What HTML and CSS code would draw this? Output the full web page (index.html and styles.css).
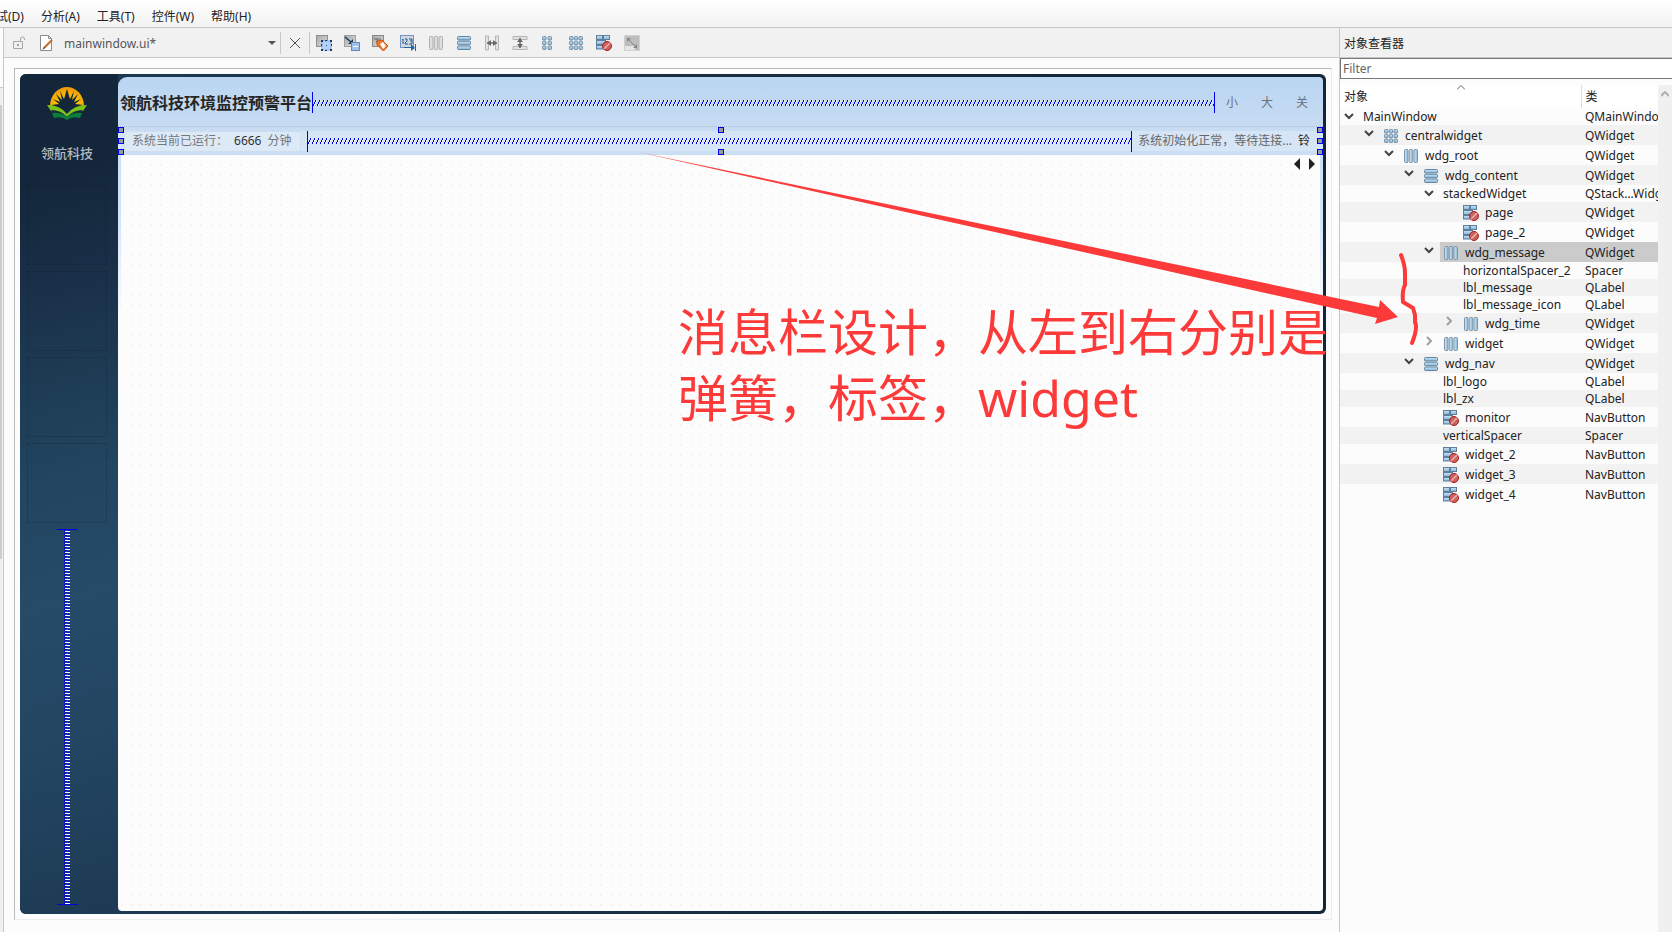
FILE: index.html
```html
<!DOCTYPE html>
<html lang="zh-CN">
<head>
<meta charset="utf-8">
<title>mainwindow.ui</title>
<link rel="stylesheet" href="styles.css">
</head>
<body>
<svg class="defs" aria-hidden="true">
  <defs>
    <linearGradient id="blue" x1="0" y1="0" x2="0" y2="1"><stop offset="0" stop-color="#c9e8fb"/><stop offset="1" stop-color="#84b0d4"/></linearGradient>
    <linearGradient id="blueH"><stop offset="0" stop-color="#d4ecfa"/><stop offset="1" stop-color="#8ab2d2"/></linearGradient>
    <linearGradient id="grey" x1="0" y1="0" x2="1" y2="1"><stop offset="0" stop-color="#a9a9a9"/><stop offset="1" stop-color="#dedede"/></linearGradient>
    <radialGradient id="sun" cx=".5" cy=".7" r=".7"><stop offset="0" stop-color="#ffe600"/><stop offset="1" stop-color="#f2930c"/></radialGradient>
    <pattern id="coil" width="4" height="6" patternUnits="userSpaceOnUse"><path d="M0 4h1v2H0zM1 2h1v2H1zM2 0h1v2H2z" fill="#0000d8"/><path d="M1 4h1v2H1zM2 2h1v2H2zM3 0h1v2H3z" fill="#fff" opacity=".6"/></pattern>
    <pattern id="coilV" width="6" height="3" patternUnits="userSpaceOnUse"><path d="M1 1h5v1H1z" fill="#fff"/><path d="M0 0h1v2H0zM1 2h2v1H1zM4 0h2v1H4z" fill="#0000f0"/></pattern>
  </defs>
  <symbol id="i-h" viewBox="0 0 16 16"><g fill="url(#blueH)" stroke="#7c95aa"><rect x="1.500" y="1.500" width="3.500" height="13" rx="1"/><rect x="6.250" y="1.500" width="3.500" height="13" rx="1"/><rect x="11" y="1.500" width="3.500" height="13" rx="1"/></g></symbol>
  <symbol id="i-hg" viewBox="0 0 16 16"><g fill="#dedede" stroke="#b0b0b0"><rect x="1.500" y="1.500" width="3.500" height="13" rx="1"/><rect x="6.250" y="1.500" width="3.500" height="13" rx="1"/><rect x="11" y="1.500" width="3.500" height="13" rx="1"/></g></symbol>
  <symbol id="i-v" viewBox="0 0 16 16"><g fill="url(#blue)" stroke="#64869f"><rect x="1.500" y="1.500" width="13" height="3.500" rx="1"/><rect x="1.500" y="6.250" width="13" height="3.500" rx="1"/><rect x="1.500" y="11" width="13" height="3.500" rx="1"/></g></symbol>
  <symbol id="i-grid" viewBox="0 0 16 16"><g fill="url(#blue)" stroke="#718ca3"><rect x="1.500" y="1.500" width="3.500" height="3.500" rx="1"/><rect x="6.250" y="1.500" width="3.500" height="3.500" rx="1"/><rect x="11" y="1.500" width="3.500" height="3.500" rx="1"/><rect x="1.500" y="6.250" width="3.500" height="3.500" rx="1"/><rect x="6.250" y="6.250" width="3.500" height="3.500" rx="1"/><rect x="11" y="6.250" width="3.500" height="3.500" rx="1"/><rect x="1.500" y="11" width="3.500" height="3.500" rx="1"/><rect x="6.250" y="11" width="3.500" height="3.500" rx="1"/><rect x="11" y="11" width="3.500" height="3.500" rx="1"/></g></symbol>
  <symbol id="i-form" viewBox="0 0 16 16"><g fill="url(#blue)" stroke="#718ca3"><rect x="2.500" y="1.500" width="3.500" height="3.500" rx="1"/><rect x="8" y="1.500" width="3.500" height="3.500" rx="1"/><rect x="2.500" y="6.250" width="3.500" height="3.500" rx="1"/><rect x="8" y="6.250" width="3.500" height="3.500" rx="1"/><rect x="2.500" y="11" width="3.500" height="3.500" rx="1"/><rect x="8" y="11" width="3.500" height="3.500" rx="1"/></g></symbol>
  <symbol id="i-break" viewBox="0 0 16 16"><g fill="url(#blue)" stroke="#5f7f9a"><rect x=".5" y=".5" width="6" height="4"/><rect x="7.500" y=".5" width="6" height="4"/><rect x=".5" y="5.500" width="9" height="4"/><rect x=".5" y="10.500" width="7" height="3.500"/></g><circle cx="11" cy="11" r="4.500" fill="#d0605a" stroke="#a01f1f"/><path d="M8 14l6-6" stroke="#e9b5b1" stroke-width="1.500"/></symbol>
  <symbol id="i-widgets" viewBox="0 0 16 16"><rect x=".5" y=".5" width="11" height="11" fill="url(#grey)" stroke="#909090"/><rect x="6" y="6" width="9" height="9" fill="#b4d2fa" stroke="#8fb0e0"/><path d="M5 5h2v2H5zM9 5h2v1H9zM14 5h2v2h-2zM5 9h1v2H5zM15 9h1v2h-1zM5 14h2v2H5zM9 15h2v1H9zM14 14h2v2h-2z" fill="#1b3764"/><path d="M10 10h1v1h-1z" fill="#224c91"/></symbol>
  <symbol id="i-signals" viewBox="0 0 16 16"><rect x=".5" y=".5" width="11" height="11" fill="url(#grey)" stroke="#a0a0a0"/><path d="M1 2l6 5" stroke="#193858" stroke-width="1.500"/><path d="M9 9V4L4 9z" fill="#193858"/><rect x="7.500" y="7.500" width="8" height="8" fill="#9fc0ec" stroke="#6888b6"/><path d="M9 11h5v1H9z" fill="#fff"/></symbol>
  <symbol id="i-buddies" viewBox="0 0 16 16"><rect x=".5" y=".5" width="11" height="11" fill="url(#grey)" stroke="#888"/><path d="M2 4h7M5 4v4" stroke="#666"/><path d="M5 6l5-1 6 6-4.500 5L5 10z" fill="#f07a2c" stroke="#c65617"/><path d="M8 9l3-2 3 4-3 3z" fill="#fff"/></symbol>
  <symbol id="i-tab" viewBox="0 0 16 16"><rect x=".5" y=".5" width="13" height="12" fill="#d3d8dd" stroke="#7193bf"/><path d="M2 5l1-1v5M5 4h2v2L5 8v1h3M9 4h3v2h-2M12 6v3H9" fill="none" stroke="#1f579b"/><path d="M4 12h7V9l4 4-4 3v-3H4zM15 9h1v7h-1z" fill="#2466ad"/></symbol>
  <symbol id="i-sh" viewBox="0 0 16 16"><path d="M1.500 1v14h3V9H6M14.500 1v14h-3V9H10M4.500 7V1h-3M11.500 7V1h3" fill="#e2e2e2" stroke="#b5b5b5"/><path d="M3 8h10" stroke="#666" stroke-width="1.500"/><path d="M3 8l4-3v6zM13 8L9 5v6z" fill="#666"/></symbol>
  <symbol id="i-sv" viewBox="0 0 16 16"><path d="M1 1.500h14v3H1zM1 11.500h14v3H1z" fill="#e2e2e2" stroke="#b5b5b5"/><path d="M8 3v10" stroke="#666" stroke-width="1.500"/><path d="M8 3L5 7h6zM8 13l-3-4h6z" fill="#666"/></symbol>
  <symbol id="i-adjust" viewBox="0 0 16 16"><rect x=".5" y=".5" width="15" height="15" fill="#bdbdbd" stroke="#d2d2d2"/><path d="M1 11h10v4H1z" fill="#e5e5e5"/><path d="M4 4l8 8" stroke="#858585"/><path d="M3 3h4L3 7zM13 13V9l-4 4z" fill="#858585"/></symbol>
  <symbol id="c-open" viewBox="0 0 20 16"><path d="M5 6l4 4 4-4" fill="none" stroke="#444" stroke-width="2"/></symbol>
  <symbol id="c-shut" viewBox="0 0 20 16"><path d="M7 4l4 4-4 4" fill="none" stroke="#a0a0a0" stroke-width="2"/></symbol>
</svg>

<nav class="menubar">
  <button>调试(D)</button><button>分析(A)</button><button>工具(T)</button><button>控件(W)</button><button>帮助(H)</button>
</nav>

<div class="workspace">
  <div class="gutter"><div class="gutter-top"></div><div class="gutter-thumb"></div></div>

  <main class="editor">
    <div class="toolbar">
      <svg class="lock" viewBox="0 0 14 16"><path d="M1.500 6.500h9v7h-9zM8.500 6V4a2 2 0 0 1 4 0v1" fill="none" stroke="#a6a6a6"/><path d="M5 9h2v2H5z" fill="#a6a6a6"/></svg>
      <div class="combo">
        <svg class="icon" viewBox="0 0 16 16"><path d="M2.500.5h8l3 3v12h-11z" fill="#fff" stroke="#8a8a8a"/><path d="M10.500.5v3h3" fill="none" stroke="#8a8a8a"/><path d="M6 13l8-8" stroke="#c4692b" stroke-width="2"/><path d="M4 15l3-2-1-1z" fill="#333"/></svg>
        <select aria-label="打开的文件"><option>mainwindow.ui*</option></select>
        <svg class="drop" viewBox="0 0 8 4"><path d="M0 0h8L4 4z" fill="#555"/></svg>
      </div>
      <button class="close" aria-label="关闭"><svg class="icon" viewBox="0 0 16 16"><path d="M3 3l10 10M13 3L3 13" stroke="#555" fill="none"/></svg></button>
      <div class="tools">
        <button aria-label="编辑控件"><svg class="icon"><use href="#i-widgets"/></svg></button>
        <button aria-label="编辑信号"><svg class="icon"><use href="#i-signals"/></svg></button>
        <button aria-label="编辑伙伴"><svg class="icon"><use href="#i-buddies"/></svg></button>
        <button aria-label="编辑顺序"><svg class="icon"><use href="#i-tab"/></svg></button>
        <button aria-label="水平布局"><svg class="icon"><use href="#i-hg"/></svg></button>
        <button aria-label="垂直布局"><svg class="icon"><use href="#i-v"/></svg></button>
        <button aria-label="水平分裂"><svg class="icon"><use href="#i-sh"/></svg></button>
        <button aria-label="垂直分裂"><svg class="icon"><use href="#i-sv"/></svg></button>
        <button aria-label="表单布局"><svg class="icon"><use href="#i-form"/></svg></button>
        <button aria-label="栅格布局"><svg class="icon"><use href="#i-grid"/></svg></button>
        <button aria-label="打破布局"><svg class="icon"><use href="#i-break"/></svg></button>
        <button aria-label="调整大小"><svg class="icon"><use href="#i-adjust"/></svg></button>
      </div>
    </div>

    <div class="canvas">
      <div class="frame">
        <div class="form">
          <aside class="side">
            <svg class="logo" viewBox="0 0 40 34"><path d="M3 20a17 19 0 1 1 34 0l-7 2-10 5-10-5z" fill="url(#sun)"/><path d="M20 28l-9-6-7-3 8-1-6-5 7 3-4-8 6 6-2-9 4 8 3-10 3 10 4-8-2 9 6-6-4 8 7-3-6 5 8 1-7 3z" fill="#14273a"/><path d="M0 19q13 0 20 9 7-9 20-9l-4 6q-9 0-16 6-7-6-16-6z" fill="#7cc41c"/><path d="M4 24q10 0 16 7 6-7 16-7l-2 2q-8 0-14 6-6-6-14-6z" fill="#14273a"/><path d="M5 27q9-1 15 4 6-5 15-4l-2 5q-8-2-13 2-5-4-13-2z" fill="#0b7d3b"/></svg>
            <div class="brand">领航科技</div>
            <div class="slots"><div></div><div></div><div></div><div></div></div>
            <div class="vspring"><svg width="6" height="100%"><rect width="6" height="100%" fill="url(#coilV)"/></svg></div>
          </aside>
          <section class="content">
            <header class="titlebar">
              <h1>领航科技环境监控预警平台</h1>
              <div class="spring"><svg width="100%" height="6"><rect width="100%" height="6" fill="url(#coil)"/></svg></div>
              <div class="winbtns"><button>小</button><button>大</button><button>关</button></div>
            </header>
            <div class="message">
              <div class="time"><span>系统当前已运行：</span><b>6666</b><span>分钟</span></div>
              <div class="spring"><svg width="100%" height="6"><rect width="100%" height="6" fill="url(#coil)"/></svg></div>
              <span class="status">系统初始化正常，等待连接...</span><span class="bell">铃</span>
              <i class="h tl"></i><i class="h ml"></i><i class="h bl"></i><i class="h tc"></i><i class="h bc"></i><i class="h tr"></i><i class="h mr"></i><i class="h br"></i>
            </div>
            <div class="stack"><div class="page">
              <button aria-label="上一页"><svg width="6" height="12"><path d="M6 0v12L0 6z" fill="#222"/></svg></button>
              <button aria-label="下一页"><svg width="6" height="12"><path d="M0 0v12l6-6z" fill="#222"/></svg></button>
            </div></div>
          </section>
        </div>
      </div>
    </div>
  </main>

  <aside class="dock">
    <h2>对象查看器</h2>
    <input class="filter" type="text" placeholder="Filter" aria-label="Filter">
    <div class="treebox">
      <table class="tree">
        <colgroup><col class="c1"><col></colgroup>
        <thead><tr><th>对象<svg class="sort" width="8" height="5"><path d="M0 4.500l4-4 4 4" fill="none" stroke="#666"/></svg></th><th>类</th></tr></thead>
        <tbody>
          <tr><td><div class="n l0"><svg class="tw"><use href="#c-open"/></svg><span>MainWindow</span></div></td><td>QMainWindow</td></tr>
          <tr class="t"><td><div class="n l1"><svg class="tw"><use href="#c-open"/></svg><span><svg class="icon"><use href="#i-grid"/></svg>centralwidget</span></div></td><td>QWidget</td></tr>
          <tr class="t"><td><div class="n l2"><svg class="tw"><use href="#c-open"/></svg><span><svg class="icon"><use href="#i-h"/></svg>wdg_root</span></div></td><td>QWidget</td></tr>
          <tr class="t"><td><div class="n l3"><svg class="tw"><use href="#c-open"/></svg><span><svg class="icon"><use href="#i-v"/></svg>wdg_content</span></div></td><td>QWidget</td></tr>
          <tr><td><div class="n l4"><svg class="tw"><use href="#c-open"/></svg><span>stackedWidget</span></div></td><td>QStack...Widget</td></tr>
          <tr class="t"><td><div class="n l5"><i class="tw"></i><span><svg class="icon"><use href="#i-break"/></svg>page</span></div></td><td>QWidget</td></tr>
          <tr class="t"><td><div class="n l5"><i class="tw"></i><span><svg class="icon"><use href="#i-break"/></svg>page_2</span></div></td><td>QWidget</td></tr>
          <tr class="t sel"><td><div class="n l4"><svg class="tw"><use href="#c-open"/></svg><span><svg class="icon"><use href="#i-h"/></svg>wdg_message</span></div></td><td>QWidget</td></tr>
          <tr><td><div class="n l5"><i class="tw"></i><span>horizontalSpacer_2</span></div></td><td>Spacer</td></tr>
          <tr><td><div class="n l5"><i class="tw"></i><span>lbl_message</span></div></td><td>QLabel</td></tr>
          <tr><td><div class="n l5"><i class="tw"></i><span>lbl_message_icon</span></div></td><td>QLabel</td></tr>
          <tr class="t"><td><div class="n l5"><svg class="tw"><use href="#c-shut"/></svg><span><svg class="icon"><use href="#i-h"/></svg>wdg_time</span></div></td><td>QWidget</td></tr>
          <tr class="t"><td><div class="n l4"><svg class="tw"><use href="#c-shut"/></svg><span><svg class="icon"><use href="#i-h"/></svg>widget</span></div></td><td>QWidget</td></tr>
          <tr class="t"><td><div class="n l3"><svg class="tw"><use href="#c-open"/></svg><span><svg class="icon"><use href="#i-v"/></svg>wdg_nav</span></div></td><td>QWidget</td></tr>
          <tr><td><div class="n l4"><i class="tw"></i><span>lbl_logo</span></div></td><td>QLabel</td></tr>
          <tr><td><div class="n l4"><i class="tw"></i><span>lbl_zx</span></div></td><td>QLabel</td></tr>
          <tr class="t"><td><div class="n l4"><i class="tw"></i><span><svg class="icon"><use href="#i-break"/></svg>monitor</span></div></td><td>NavButton</td></tr>
          <tr><td><div class="n l4"><i class="tw"></i><span>verticalSpacer</span></div></td><td>Spacer</td></tr>
          <tr class="t"><td><div class="n l4"><i class="tw"></i><span><svg class="icon"><use href="#i-break"/></svg>widget_2</span></div></td><td>NavButton</td></tr>
          <tr class="t"><td><div class="n l4"><i class="tw"></i><span><svg class="icon"><use href="#i-break"/></svg>widget_3</span></div></td><td>NavButton</td></tr>
          <tr class="t"><td><div class="n l4"><i class="tw"></i><span><svg class="icon"><use href="#i-break"/></svg>widget_4</span></div></td><td>NavButton</td></tr>
        </tbody>
      </table>
      <div class="scroll"><svg width="8" height="6"><path d="M0 5l4-4 4 4" fill="none" stroke="#b0b0b0" stroke-width="2"/></svg></div>
    </div>
  </aside>
</div>

<svg class="ink" width="1430" height="360" viewBox="0 0 1430 360" aria-hidden="true">
  <path d="M638 152L1379 307l1-7 18 17-23 7 2-6z" fill="#fb3a39"/>
  <path d="M1401 255q4 10 4 18v12q-3 5-2 17l10 6 2 7v7q3 6-3 21" fill="none" stroke="#fb3a39" stroke-width="4" stroke-linecap="round" stroke-linejoin="round"/>
</svg>
<p class="note">消息栏设计，从左到右分别是<br>弹簧，标签，widget</p>
</body>
</html>
```

FILE: styles.css
```css
* { box-sizing: border-box; }
body {
  margin: 0;
  height: 100vh;
  display: flex;
  flex-direction: column;
  overflow: hidden;
  position: relative;
  background: #fcfcfc;
  color: #222;
  font: 12px/16px "Noto Sans", "Noto Sans CJK SC", sans-serif;
}
button {
  border: 0;
  padding: 0;
  background: none;
  color: inherit;
  font: inherit;
  display: block;
}
svg { display: block; flex: none; }
.defs { position: absolute; width: 0; height: 0; }
.icon { width: 16px; height: 16px; }

.menubar {
  display: flex;
  gap: 17px;
  height: 28px;
  flex: none;
  padding-top: 6px;
  margin-left: -16px;
  background: linear-gradient(#fff, #f2f2f2);
  border-bottom: 1px solid #c8c8c8;
}
.menubar button { white-space: nowrap; }

.workspace { flex: 1; display: flex; min-height: 0; }
.gutter { width: 4px; flex: none; border-right: 1px solid #c8c8c8; background: #f0f0f0; }
.gutter-top { height: 60px; border-bottom: 1px solid #c8c8c8; background: #fcfcfc; }
.gutter-thumb { width: 2px; height: 454px; margin-top: 17px; background: #cdcdcd; }
.editor { flex: 1; min-width: 0; display: flex; flex-direction: column; }

.toolbar {
  display: flex;
  align-items: center;
  height: 30px;
  flex: none;
  background: #f1f1f1;
  border-bottom: 1px solid #c8c8c8;
}
.lock { width: 14px; height: 16px; margin-left: 8px; }
.combo {
  display: flex;
  align-items: center;
  width: 243px;
  height: 22px;
  margin-left: 12px;
  padding-right: 4px;
  border-right: 1px solid #c8c8c8;
}
.combo select {
  appearance: none;
  flex: 1;
  border: 0;
  padding: 2px 0 0 10px;
  background: none;
  font: inherit;
  color: #555;
}
.drop { width: 8px; height: 4px; }
.close { padding: 3px 6px; border-right: 1px solid #c8c8c8; }
.tools { display: flex; gap: 12px; padding-left: 6px; }

.canvas { flex: 1; padding: 10px 7px 12px 10px; display: flex; }
.frame {
  flex: 1;
  padding: 5px;
  display: flex;
  border: 1px solid #ededed;
  border-top-color: #b8b8b8;
  border-left-color: #b8b8b8;
}
.form {
  flex: 1;
  display: grid;
  grid-template-columns: 98px 1fr;
  padding: 0 3px 0 0;
  border-radius: 6px;
  overflow: hidden;
  background: linear-gradient(90deg, #1e3b55, #14273a 80%);
}
.side {
  display: flex;
  flex-direction: column;
  align-items: center;
  padding: 12px 4px 0 0;
  background: linear-gradient(165deg, #14273a 13%, #1a2f48 25%, #1c3850 33%, #224560 48%, #254b69 62%, #234662 78%, #1e3b55 98%);
}
.logo { width: 40px; height: 34px; }
.brand { margin-top: 25px; font-size: 13px; font-weight: 500; color: #b3bac0; }
.slots { display: grid; gap: 6px; width: 80px; margin-top: 24px; }
.slots div { height: 80px; border: 1px dotted rgba(10, 25, 40, 0.4); }
.vspring {
  flex: 1;
  width: 21px;
  display: flex;
  justify-content: center;
  margin: 6px 0 9px;
  border-top: 1px solid #0000f0;
  border-bottom: 1px solid #0000f0;
}

.content {
  display: flex;
  flex-direction: column;
  min-width: 0;
  margin: 3px 0;
  border-radius: 9px 4px 4px 4px;
  overflow: hidden;
  background: linear-gradient(#bad6f2, #c7dbf3 50px, #cbdff4 78px, #d5e6fa 150px, #fcfcfc 240px);
}
.titlebar {
  display: flex;
  align-items: center;
  height: 50px;
  flex: none;
  padding: 2px 15px 0 2px;
  border-bottom: 1px dotted #a9bdd4;
}
h1 { margin: 0; font-size: 16px; line-height: 20px; white-space: nowrap; color: #262626; }
.spring {
  flex: 1;
  display: flex;
  align-items: center;
  height: 21px;
  min-width: 0;
  border-left: 1px solid #0000f0;
  border-right: 1px solid #0000f0;
}
.spring svg { flex: 1; min-width: 0; }
.winbtns { display: flex; gap: 23px; padding-left: 11px; color: #6a7078; }
.message {
  position: relative;
  display: flex;
  align-items: center;
  height: 28px;
  flex: none;
  padding: 0 13px 0 6px;
  background: linear-gradient(rgba(255, 255, 255, 0), rgba(255, 255, 255, 0) 4px, rgba(255, 255, 255, 0.25) 4px, rgba(255, 255, 255, 0.25) 24px, rgba(255, 255, 255, 0) 24px);
}
.time {
  display: flex;
  align-items: center;
  width: 177px;
  height: 21px;
  padding-left: 7px;
  margin-right: 6px;
  border: 1px dotted #c2d2e4;
  border-radius: 4px;
  background: #dce9f7;
  color: #777;
  white-space: nowrap;
}
.time b { font-weight: 400; color: #333; margin: 0 6px; }
.status { padding-left: 6px; color: #666; white-space: nowrap; }
.bell { padding-left: 6px; color: #222; }
.h { position: absolute; width: 6px; height: 6px; border: 1px solid #0000f0; background: #9a9a9a; }
.tl { left: 0; top: 0; } .ml { left: 0; top: 11px; } .bl { left: 0; bottom: 0; }
.tc { left: calc(50% - 3px); top: 0; } .bc { left: calc(50% - 3px); bottom: 0; }
.tr { right: 0; top: 0; } .mr { right: 0; top: 11px; } .br { right: 0; bottom: 0; }
.stack { flex: 1; display: flex; padding: 0 3px; }
.page {
  flex: 1;
  display: flex;
  justify-content: flex-end;
  align-items: flex-start;
  gap: 9px;
  padding: 3px 5px;
  background: #fcfcfc radial-gradient(circle at 5px 5px, #f3f3f3 0, #f3f3f3 1px, transparent 1px) 5px 5px / 10px 10px;
}

.dock { width: 333px; flex: none; display: flex; flex-direction: column; border-left: 1px solid #c8c8c8; }
h2 {
  margin: 0;
  height: 30px;
  flex: none;
  padding: 8px 4px 0;
  font-size: 12px;
  line-height: 16px;
  font-weight: 400;
  background: #f1f1f1;
  border-bottom: 1px solid #c8c8c8;
}
.filter {
  height: 21px;
  flex: none;
  border: 1px solid #777;
  border-right: 0;
  padding: 0 2px;
  font: inherit;
  background: #fff;
}
.filter::placeholder { color: #666; }
.treebox { flex: 1; display: flex; align-items: stretch; margin-top: 6px; min-height: 0; }
.tree { flex: 1; align-self: flex-start; table-layout: fixed; border-collapse: collapse; width: 0; }
.c1 { width: 241px; }
th {
  position: relative;
  height: 23px;
  padding: 0 4px;
  text-align: left;
  font-weight: 400;
  background: #fff;
}
th + th { border-left: 1px solid #dcdcdc; }
.sort { position: absolute; left: 117px; top: 0; }
td { height: 17px; padding: 0; overflow: hidden; white-space: nowrap; line-height: 16px; }
td + td { padding-left: 4px; }
.t td { height: 20px; }
.t td + td { padding-top: 2px; }
tbody tr:nth-child(even) { background: #f2f2f2; }
.n { display: flex; align-items: stretch; height: 17px; }
.t .n { height: 20px; line-height: 18px; }
.n span { flex: 1; display: flex; align-items: center; gap: 6px; padding-left: 3px; }
.t .n span { padding-top: 1px; }
.tw { width: 20px; height: 16px; flex: none; }
.l1 { padding-left: 20px; } .l2 { padding-left: 40px; } .l3 { padding-left: 60px; }
.l4 { padding-left: 80px; } .l5 { padding-left: 100px; }
.sel span, .sel td + td { background: #cbcbcb; }
.scroll { width: 14px; flex: none; padding: 6px 3px; background: #f0f0f0; }

.ink { position: absolute; left: 0; top: 0; pointer-events: none; }
.note {
  position: absolute;
  left: 678px;
  top: 299px;
  margin: 0;
  font-size: 50px;
  line-height: 66px;
  color: #fb3a39;
  white-space: nowrap;
}
```
